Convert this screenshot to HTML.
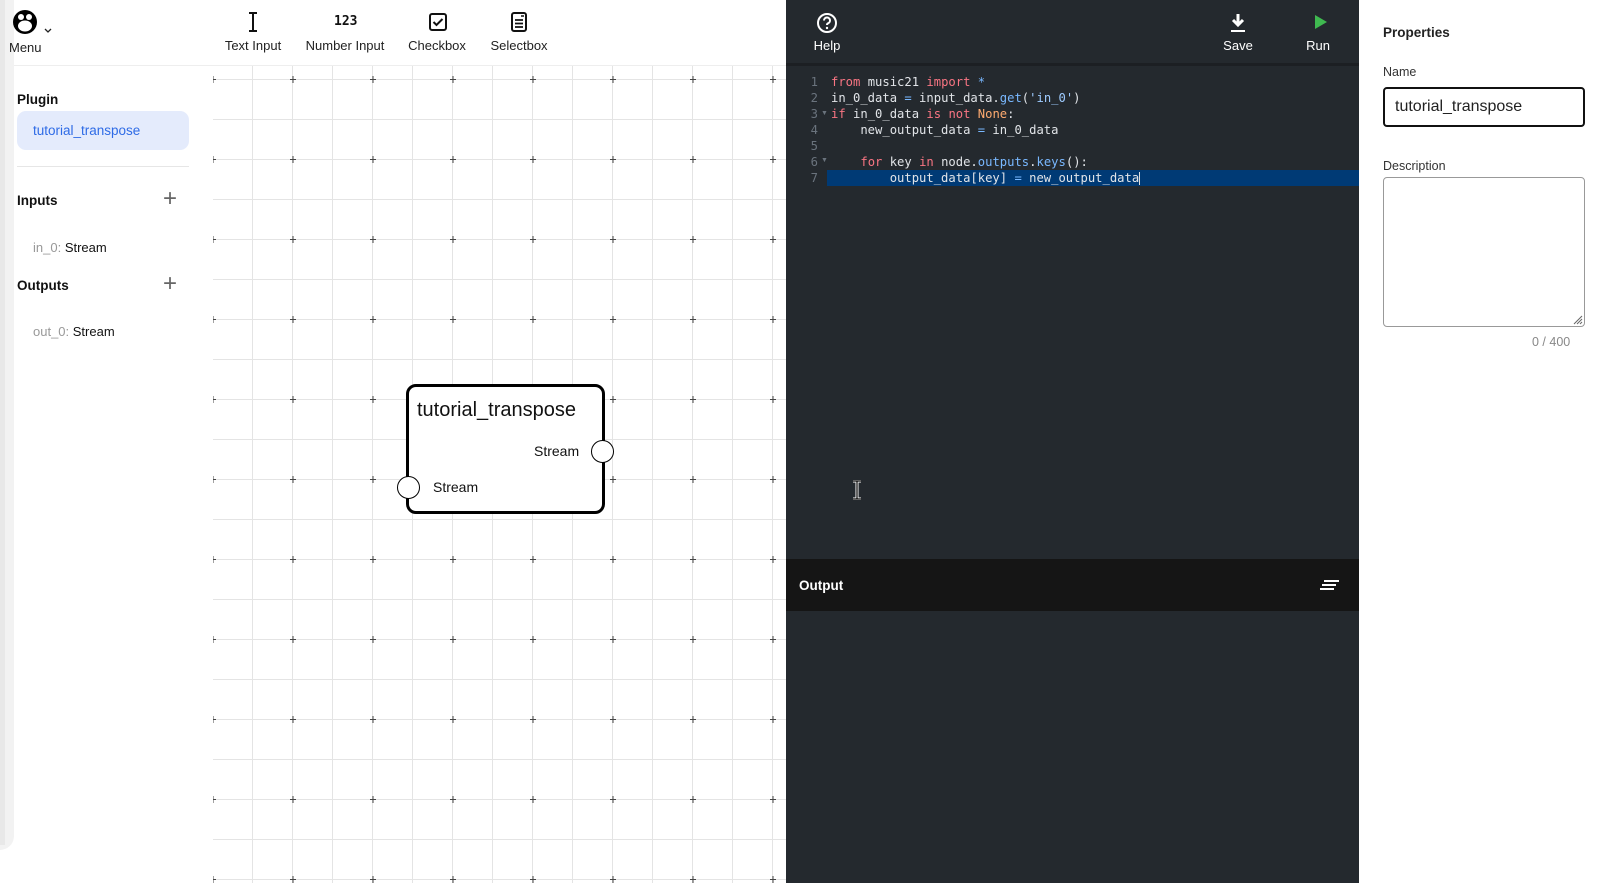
<!DOCTYPE html>
<html><head><meta charset="utf-8"><style>
*{margin:0;padding:0;box-sizing:border-box}
body{width:1601px;height:883px;overflow:hidden;background:#fff;font-family:"Liberation Sans",sans-serif;position:relative;color:#111}
.a{position:absolute;white-space:nowrap}
.mono{font-family:"DejaVu Sans Mono","Liberation Mono",monospace;font-size:12.2px;color:#e1e4e8}
.ln{color:#6a737d;font-family:"DejaVu Sans Mono",monospace;font-size:12.2px}
.k{color:#f97583}.b{color:#79b8ff}.s{color:#9ecbff}.o{color:#ffab70}
.tb{font-size:13px;color:#222;text-align:center;transform:translateX(-50%)}
</style></head><body>
<div class="a" style="left:0;top:0;width:14px;height:850px;background:#f2f2f2;border-bottom-right-radius:16px"></div>
<div class="a" style="left:0;top:0;width:5px;height:845px;background:#e8e8e8"></div>
<div class="a" style="left:14px;top:65px;width:772px;height:1px;background:#eee"></div>
<svg class="a" style="left:12px;top:8px" width="28" height="28" viewBox="0 0 28 28"><circle cx="13" cy="14" r="12" fill="#000"/><ellipse cx="13" cy="18" rx="7" ry="5.5" fill="#fff"/><circle cx="9" cy="9" r="3" fill="#fff"/><circle cx="17" cy="9" r="3" fill="#fff"/></svg>
<svg class="a" style="left:44px;top:28px" width="8" height="6"><path d="M1 1l3 3 3-3" stroke="#222" stroke-width="1.3" fill="none"/></svg>
<div class="a" style="left:9px;top:40px;font-size:13px;color:#222">Menu</div>
<svg class="a" style="left:248px;top:12px" width="10" height="20"><path d="M1 1h8M1 19h8M5 1v18" stroke="#111" stroke-width="2" fill="none"/></svg>
<div class="a" style="left:334px;top:14px;font-size:13px;font-weight:bold;font-family:'DejaVu Sans Mono',monospace">123</div>
<svg class="a" style="left:429px;top:13px" width="18" height="18"><rect x="1" y="1" width="16" height="16" rx="2" stroke="#111" stroke-width="2" fill="none"/><path d="M4.5 9l3 3 6-6" stroke="#111" stroke-width="2" fill="none"/></svg>
<svg class="a" style="left:511px;top:12px" width="16" height="20"><rect x="1" y="1" width="14" height="18" rx="2" stroke="#111" stroke-width="2" fill="none"/><path d="M4 8h8M4 11.5h8M4 15h8" stroke="#111" stroke-width="1.8"/><path d="M10 4h3" stroke="#111" stroke-width="1.5"/></svg>
<div class="a tb" style="left:253px;top:38px">Text Input</div>
<div class="a tb" style="left:345px;top:38px">Number Input</div>
<div class="a tb" style="left:437px;top:38px">Checkbox</div>
<div class="a tb" style="left:519px;top:38px">Selectbox</div>
<div class="a" style="left:17px;top:92px;font-size:13.5px;font-weight:bold">Plugin</div>
<div class="a" style="left:17px;top:111px;width:172px;height:39px;background:#e4ebfc;border-radius:9px"></div>
<div class="a" style="left:33px;top:123px;font-size:13.5px;color:#2e6be6">tutorial_transpose</div>
<div class="a" style="left:17px;top:166px;width:172px;height:1px;background:#e6e6e6"></div>
<div class="a" style="left:17px;top:193px;font-size:13.5px;font-weight:bold">Inputs</div>
<div class="a" style="left:163px;top:185px;font-size:24px;color:#666;font-weight:300">+</div>
<div class="a" style="left:33px;top:240px;font-size:13px"><span style="color:#999">in_0: </span>Stream</div>
<div class="a" style="left:17px;top:278px;font-size:13.5px;font-weight:bold">Outputs</div>
<div class="a" style="left:163px;top:270px;font-size:24px;color:#666;font-weight:300">+</div>
<div class="a" style="left:33px;top:324px;font-size:13px"><span style="color:#999">out_0: </span>Stream</div>
<svg class="a" style="left:213px;top:66px" width="573" height="817">
<defs><pattern id="g" x="0" y="0" width="40" height="40" patternUnits="userSpaceOnUse" patternTransform="translate(0,13)"><path d="M0 0.5H40M39.5 0V40" stroke="#e4e4e4" stroke-width="1" fill="none"/></pattern>
<pattern id="c" x="0" y="0" width="80" height="80" patternUnits="userSpaceOnUse" patternTransform="translate(0,13)"><path d="M77 0.5h6M80 -3v7M-3 0.5h6M0 -3v7M77 80.5h6M80 77v7M-3 80.5h6M0 77v7" stroke="#444" stroke-width="1" fill="none"/></pattern></defs>
<rect width="573" height="817" fill="url(#g)"/>
<rect width="573" height="817" fill="url(#c)"/>
</svg>
<div class="a" style="left:406px;top:384px;width:199px;height:130px;border:3px solid #000;border-radius:10px;background:#fff"></div>
<div class="a" style="left:417px;top:399px;font-size:20px">tutorial_transpose</div>
<div class="a" style="left:534px;top:443px;font-size:14px">Stream</div>
<div class="a" style="left:433px;top:479px;font-size:14px">Stream</div>
<div class="a" style="left:591px;top:440px;width:23px;height:23px;border:1.5px solid #000;border-radius:50%;background:#fff"></div>
<div class="a" style="left:397px;top:476px;width:23px;height:23px;border:1.5px solid #000;border-radius:50%;background:#fff"></div>
<div class="a" style="left:786px;top:0;width:573px;height:883px;background:#24292e"></div>
<div class="a" style="left:786px;top:63px;width:573px;height:3px;background:#1c1f23"></div>
<svg class="a" style="left:816px;top:12px" width="22" height="22"><circle cx="11" cy="11" r="9" stroke="#fff" stroke-width="2" fill="none"/><path d="M8 8.5a3 3 0 1 1 4 2.8c-.8.4-1 .9-1 1.7" stroke="#fff" stroke-width="2" fill="none"/><circle cx="11" cy="16" r="1.2" fill="#fff"/></svg>
<div class="a tb" style="left:827px;top:38px;color:#fff">Help</div>
<svg class="a" style="left:1229px;top:13px" width="18" height="20"><path d="M9 1v10M4 7l5 5 5-5" stroke="#fff" stroke-width="3" fill="none"/><path d="M2 18h14" stroke="#fff" stroke-width="2"/></svg>
<div class="a tb" style="left:1238px;top:38px;color:#fff">Save</div>
<svg class="a" style="left:1314px;top:14px" width="14" height="16"><path d="M1 1l12 7-12 7z" fill="#3fb950"/></svg>
<div class="a tb" style="left:1318px;top:38px;color:#fff">Run</div>
<div class="a" style="left:827px;top:170px;width:532px;height:16px;background:#003a75"></div>
<div class="a ln" style="left:808px;top:74px;line-height:16px;text-align:right;width:10px">1<br>2<br>3<br>4<br>5<br>6<br>7</div>
<div class="a" style="left:821px;top:110px;font-size:7px;color:#6a737d">▼</div>
<div class="a" style="left:821px;top:157px;font-size:7px;color:#6a737d">▼</div>
<div class="a mono" style="left:831px;top:74px;line-height:16px">
<span class="k">from</span> music21 <span class="k">import</span> <span class="b">*</span><br>
in_0_data <span class="b">=</span> input_data.<span class="b">get</span>(<span class="s">'in_0'</span>)<br>
<span class="k">if</span> in_0_data <span class="k">is</span> <span class="k">not</span> <span class="o">None</span>:<br>
&nbsp;&nbsp;&nbsp;&nbsp;new_output_data <span class="b">=</span> in_0_data<br>
<br>
&nbsp;&nbsp;&nbsp;&nbsp;<span class="k">for</span> key <span class="k">in</span> node.<span class="b">outputs</span>.<span class="b">keys</span>():<br>
&nbsp;&nbsp;&nbsp;&nbsp;&nbsp;&nbsp;&nbsp;&nbsp;output_data[key] <span class="b">=</span> new_output_data<span style="display:inline-block;width:1px;height:13px;background:#ddd;vertical-align:middle"></span>
</div>
<svg class="a" style="left:851px;top:480px" width="12" height="20"><path d="M2 1h8M6 1v18M2 19h8" stroke="#fff" stroke-width="3"/><path d="M2 1h8M6 1v18M2 19h8" stroke="#000" stroke-width="1.2"/></svg>
<div class="a" style="left:786px;top:559px;width:573px;height:52px;background:#151515"></div>
<div class="a" style="left:799px;top:578px;font-size:13.5px;font-weight:bold;color:#fff">Output</div>
<div class="a" style="left:1324px;top:580px;width:15px;height:2px;background:#fff"></div>
<div class="a" style="left:1322px;top:584px;width:14px;height:2px;background:#fff"></div>
<div class="a" style="left:1320px;top:588px;width:14px;height:2px;background:#fff"></div>
<div class="a" style="left:1383px;top:25px;font-size:13.5px;font-weight:bold;color:#222">Properties</div>
<div class="a" style="left:1383px;top:65px;font-size:12.5px;color:#333">Name</div>
<div class="a" style="left:1383px;top:87px;width:202px;height:40px;border:2px solid #111;border-radius:4px"></div>
<div class="a" style="left:1395px;top:98px;font-size:16px;color:#222">tutorial_transpose</div>
<div class="a" style="left:1383px;top:159px;font-size:12.5px;color:#333">Description</div>
<div class="a" style="left:1383px;top:177px;width:202px;height:150px;border:1.5px solid #999;border-radius:4px"></div>
<svg class="a" style="left:1573px;top:315px" width="10" height="10"><path d="M1 9l8-8M4 9l5-5M7 9l2-2" stroke="#666" stroke-width="1"/></svg>
<div class="a" style="left:1532px;top:335px;font-size:12.5px;color:#888">0 / 400</div>
</body></html>
